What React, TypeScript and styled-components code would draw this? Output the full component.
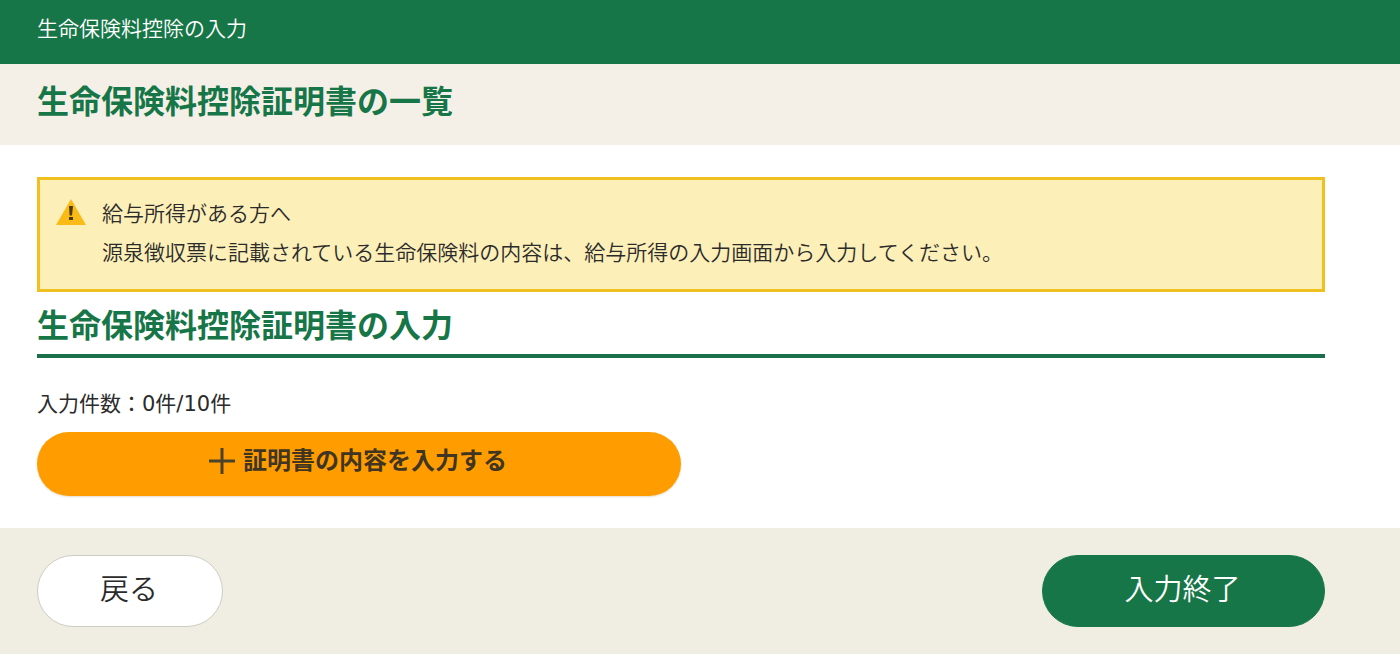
import React from "react";
import styled, { createGlobalStyle } from "styled-components";

const green = "#177647";
const ink = "#2b2b2b";

const GlobalStyle = createGlobalStyle`
  *, *::before, *::after { box-sizing: border-box; }
  body {
    margin: 0;
    background: #fff;
    color: ${ink};
    font-family: "DejaVu Sans", "Noto Sans CJK JP", sans-serif;
    font-size: 21px;
    font-weight: 350;
    line-height: 40px;
  }
  h1, h2, p { margin: 0; }
  button { font-family: inherit; cursor: pointer; }
`;

const AppHeader = styled.header`
  padding: 9px 75px 15px 37px;
  background: ${green};
  color: #fff;
`;

const TitleBand = styled.div`
  padding: 18px 75px 23px 37px;
  background: #f4f0e8;
`;

const PageTitle = styled.h1`
  color: ${green};
  font-size: 32px;
  font-weight: 700;
  line-height: 40px;
`;

const Content = styled.main`
  padding: 32px 75px 32px 37px;
`;

const Notice = styled.section`
  display: flex;
  gap: 16px;
  padding: 15px 16px 16px;
  border: 3px solid #efc01f;
  background: #fdefb8;
  line-height: 39px;
`;

const WarningIcon = styled.svg`
  flex: none;
  width: 30px;
  height: 28px;
  margin-top: 3px;
`;

const SectionTitle = styled.h2`
  margin-top: 14px;
  padding-bottom: 8px;
  border-bottom: 4px solid #19704a;
  color: ${green};
  font-size: 32px;
  font-weight: 700;
  line-height: 40px;
`;

const EntryCount = styled.p`
  margin-top: 26px;
  font-weight: 400;
`;

const AddButton = styled.button`
  display: flex;
  align-items: center;
  justify-content: center;
  gap: 8px;
  width: 50%;
  height: 64px;
  margin-top: 8px;
  padding: 0 2px 6px 0;
  border: 0;
  border-radius: 32px;
  background: #ff9d00;
  box-shadow: 0 1px 2px #e8dcc8;
  color: #3f3522;
  font-size: 24px;
  font-weight: 700;
`;

const AddLabel = styled.span`
  padding-bottom: 6px;
`;

const PlusIcon = styled.svg`
  width: 26px;
  height: 26px;
`;

const ActionBar = styled.footer`
  display: flex;
  justify-content: space-between;
  padding: 27px 75px 27px 37px;
  background: #f0ede3;
`;

const ActionButton = styled.button<{ $primary?: boolean }>`
  width: ${(p) => (p.$primary ? "283px" : "186px")};
  height: 72px;
  padding: 0 2px 8px 0;
  border: 1px solid ${(p) => (p.$primary ? green : "#cfcdc2")};
  border-radius: 36px;
  background: ${(p) => (p.$primary ? green : "#fff")};
  color: ${(p) => (p.$primary ? "#fff" : ink)};
  font-size: 29px;
  font-weight: 350;
`;

export default function App() {
  return (
    <>
      <GlobalStyle />
      <AppHeader>生命保険料控除の入力</AppHeader>
      <TitleBand>
        <PageTitle>生命保険料控除証明書の一覧</PageTitle>
      </TitleBand>
      <Content>
        <Notice>
          <WarningIcon viewBox="0 0 30 28" aria-hidden="true">
            <path d="M15 1 30 27H0Z" fill="#fbbb16" />
            <path d="M13 8h4l-1 9.5h-2.4Z" fill="#4b3a16" />
            <rect x="13" y="19" width="4" height="3" fill="#4b3a16" />
          </WarningIcon>
          <div>
            <p>給与所得がある方へ</p>
            <p>源泉徴収票に記載されている生命保険料の内容は、給与所得の入力画面から入力してください。</p>
          </div>
        </Notice>
        <SectionTitle>生命保険料控除証明書の入力</SectionTitle>
        <EntryCount>入力件数：0件/10件</EntryCount>
        <AddButton type="button">
          <PlusIcon viewBox="0 0 26 26" aria-hidden="true">
            <path d="M13 0v26M0 13h26" stroke="#4a432c" strokeWidth="3" />
          </PlusIcon>
          <AddLabel>証明書の内容を入力する</AddLabel>
        </AddButton>
      </Content>
      <ActionBar>
        <ActionButton type="button">戻る</ActionButton>
        <ActionButton type="button" $primary>入力終了</ActionButton>
      </ActionBar>
    </>
  );
}
